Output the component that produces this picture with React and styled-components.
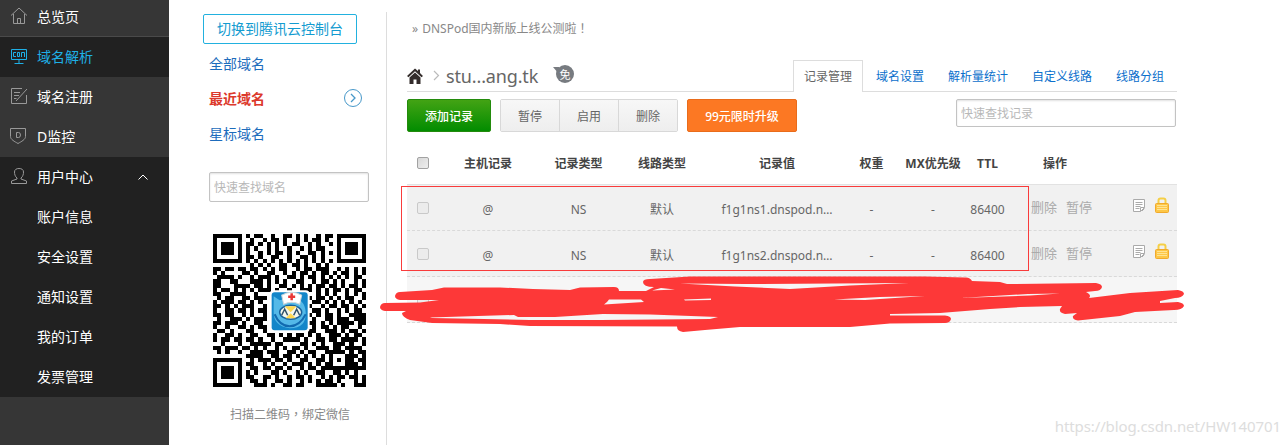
import styled, { createGlobalStyle, css } from 'styled-components';

const GlobalStyle = createGlobalStyle`
    * {
        box-sizing: border-box;
    }
    body {
        margin: 0;
        background: #fff;
        font-family: "Noto Sans", "Noto Sans CJK SC", sans-serif;
        font-size: 12px;
        color: #666;
    }
`;

const topMenu = [
    { label: '域名解析', icon: 'screen', active: true },
    { label: '域名注册', icon: 'edit' },
    { label: 'D监控', icon: 'shield' },
];
const userMenu = ['账户信息', '安全设置', '通知设置', '我的订单', '发票管理'];
const tabs = ['记录管理', '域名设置', '解析量统计', '自定义线路', '线路分组'];
const headers = ['主机记录', '记录类型', '线路类型', '记录值', '权重', 'MX优先级', 'TTL'];
const records = [
    ['@', 'NS', '默认', 'f1g1ns1.dnspod.n…', '-', '-', '86400'],
    ['@', 'NS', '默认', 'f1g1ns2.dnspod.n…', '-', '-', '86400'],
];

const qrRows = [
    '#######.#.##..#..##.#.#..#.##.#######',
    '#.....#..#..#.##.#..#.#.##.#..#.....#',
    '#.###.#.##.#.#.#.#.##..#.#..#.#.###.#',
    '#.###.#.#.#..#.#..#..#.#.##...#.###.#',
    '#.###.#.#..#.#.##.#.#..##.#.#.#.###.#',
    '#.....#.##.#..##..#..##.#.#...#.....#',
    '#######.#.#.#.#.#.#.#.#.#.#.#.#######',
    '.........#.#.#..##.##.#..#.#.........',
    '##.##.##.##.#.#.##..#.##.###..#.#.#.#',
    '#.#....##.#..##..#.#.##.#.##.#.##.#.#',
    '.####.#..#.###.#..##.#.##.#.#.#.#.##.',
    '##..##...###.#.#.#..##..#.##.#.#..#.#',
    '##...####.##.#..##.#.#.#.##.##.#.##.#',
    '#.##.#.#.#.###.#..#..###.#.#.##.#.##.',
    '##..####..#...........#..#.#.#..#.#.#',
    '.#.##..##.###..........#.##.#.#.##..#',
    '#.###.##.#.#............##.#.#.#.#.#.',
    '##.#.#.###..#..........#..#.##.##.#.#',
    '#..##.##.#.##...........##.#..#.#.##.',
    '##.##..#.#..#..........#.#.##.#..####',
    '.#..###.#.###...........#..##.###.###',
    '##.###.#..##...........##.#.#.####.##',
    '#..#..##.#.##...........#.##.#.##..#.',
    '.##.#...##..#..........##..###.#.##.#',
    '#..##.#..##..##.#.#.##.#.#..###.#.##.',
    '#.##.##.##.#..#..####.#..##.##.####.#',
    '..#...#..#####.##....##.#.#..###.#..#',
    '##.###.##.#.#..#.#.##.#..###.##.####.',
    '.#.#..#..###.###..##.#.##..#####.#.##',
    '........####..##.##.#.#.#.#.#...###.#',
    '#######..#.###.##.#..##..##.#.#.##.##',
    '#.....#.##..#.#..#.###.#.#.##...###.#',
    '#.###.#..##.##.##.#..#.##.###########',
    '#.###.#.#.#...##.#..#.#..##..##.#.#..',
    '#.###.#.##..##.#..#.##.#..#.#.##.##.#',
    '#.....#..##.#..##.#..#.#.#.##.#...#.#',
    '#######...###.#..##.##...#####.#..###',
];

function MenuIcon({ type }) {
    return (
        <svg width="18" height="18" viewBox="0 0 18 18" fill="none" stroke="currentColor">
            {type === 'home' && <path d="M1 8.5 9 1l8 7.5M3.5 7v9.5h11V7M7.5 16.500v-5h3v5" />}
            {type === 'screen' && (
                <path d="M1.500 2.500h15v10h-15zM9 13v3.500M4.500 16.500h9M6 5.500H3.500v4H6M7.500 5.500h2v4h-2zM11.500 10V5.500h3V10" />
            )}
            {type === 'edit' && <path d="M12 1.500H1.500v15h15V8M17 2 6 14M4 5.500h6M4 8.500h5M4 11.500h2.500" />}
            {type === 'shield' && <path d="M.5 1.500h15v8c0 3-4 5-7.500 7C4.500 14.500.5 12.500.5 9.500zM6.500 5.500h2q2 0 2 2.500t-2 2.500h-2z" />}
            {type === 'user' && (
                <path d="M7 11C5 9.500 4.500 7 4.500 5 4.500 2.500 6.500 1.500 9 1.500s4.500 1 4.500 3.500c0 2-.5 4.500-2.500 6v1l5.500 2v2.500h-15V14L7 12z" />
            )}
        </svg>
    );
}

function QrCode() {
    const d = qrRows
        .flatMap((row, y) => [...row].map((c, x) => (c === '#' ? `M${x} ${y}h1v1h-1z` : '')))
        .join('');
    return (
        <svg width="153" height="153" viewBox="0 0 37 37">
            <path d={d} fill="#000" shapeRendering="crispEdges" />
            <g transform="translate(13.7 13.600) scale(.242)">
                <rect width="40" height="42" rx="4" fill="#fff" />
                <rect x="2" y="2" width="36" height="38" rx="3" fill="#1386c9" />
                <path d="M4 6l6 4 7-2q18-2 19 14T20 38Q4 36 4 22z" fill="#54b9e8" />
                <path d="M5 24q5 12 15 12t16-12" fill="none" stroke="#126bb0" strokeWidth="2" />
                <ellipse cx="21" cy="22" rx="11" ry="7" fill="#f4f7ed" stroke="#18629c" strokeWidth="1.500" />
                <path d="M15 16h12l-6 6zM16 28l5-5 5 5z" fill="#ffd850" />
                <path d="M12 25l3-6 3 6M24 25l3-6 3 6" fill="none" stroke="#315169" strokeWidth="1.500" />
                <path d="M12 5q10-6 20 0l-2 9q-8-4-16 0z" fill="#fff" stroke="#ccd6da" />
                <path d="M22 3v7M18.500 6.500h7" stroke="#e83837" strokeWidth="2.500" />
            </g>
        </svg>
    );
}

function RowIcons() {
    return (
        <Icons>
            <svg width="14" height="16" viewBox="0 0 14 16" fill="none" stroke="#aaa">
                <path d="M1.500 2.500h11v8l-4 4h-7z" fill="#fff" />
                <path d="M3.500 5.500h7M3.500 7.500h7M3.500 9.500h5M3.500 11.500h4M8.500 14.500v-4h4M10 14l2.500-2.500" />
            </svg>
            <svg width="14" height="17" viewBox="0 0 14 17">
                <path d="M3.500 8V3.500q0-2 2-2h3q2 0 2 2V8" fill="none" stroke="#f5cf46" strokeWidth="2" />
                <rect x=".5" y="6.500" width="13" height="9" rx="1" fill="#fdc747" stroke="#f1aa2c" />
                <path d="M2 8.500h10M2 10.500h10M2 12.500h10" stroke="#ffe392" />
            </svg>
        </Icons>
    );
}

function Scribble() {
    return (
        <ScribbleLayer viewBox="380 270 810 65" fill="#fd3838">
            <path d="M400 292 432 290 444 287.500 500 287.500 533 289 570 290 580 287.500 614 287Q619 287 619 291L646 291 654 287Q643 287 643 282 643 279 650 279L690 276.500H925L965 277.500Q970 277 972 281L1000 282 1007 284 1096 283Q1102 284 1102 287 1101 291 1095 291L1086 292Q1092 295 1089 298L1130 293 1178 290Q1184 291 1184 294 1182 298 1175 298L1160 301V303L1178 302Q1184 303 1184 306 1182 310 1174 310L1135 312 1120 316 1078 320.500Q1072 320 1073 316L1077 313 1065 314Q1059 313 1060 309L1062 306 1020 307 990 309 940 313 890 314V315.500H945Q951 316 951 319 950 323 945 323L890 323.500 850 327H740L705 330 683 332Q677 331 677 326.500L530 326 500 324 432 323 410 320Q402 317 402 313L406 311H385Q380 310 380 307 381 303 385 303L420 302.500 439 300H400Q395 299 395 296 396 292 400 292Z" />
            <g fill="#f6f6f6">
                <path d="M680 283.500 745 284 909 283 850 285.500 790 289 735 286.500zM661 288 675 289.500 652 290.500zM609 299.500H641L644 302 604 304.500 607 302zM684 299.500 711 298.500V300L685 300.500zM834 299.500 880 297 925 296 865 300zM960 298 1028 294 1060 293.500 1030 295.500z" />
                <path d="M430 317.500 514 315 518 317H555L603 314 650 314.500 718 317 710 319 600 320H530L432 318z" />
            </g>
        </ScribbleLayer>
    );
}

export default function App() {
    return (
        <Page>
            <GlobalStyle />
            <Sidebar>
                <MenuItem $first>
                    <MenuIcon type="home" />
                    <MenuText>总览页</MenuText>
                </MenuItem>
                {topMenu.map((item) => (
                    <MenuItem key={item.label} $active={item.active}>
                        <MenuIcon type={item.icon} />
                        <MenuText>{item.label}</MenuText>
                    </MenuItem>
                ))}
                <SubMenu>
                    <MenuItem>
                        <MenuIcon type="user" />
                        <MenuText>用户中心</MenuText>
                        <Caret width="10" height="6" viewBox="0 0 10 6">
                            <path d="M.5 5.500 5 1l4.500 4.500" fill="none" stroke="#fff" />
                        </Caret>
                    </MenuItem>
                    {userMenu.map((label) => (
                        <SubItem key={label}>{label}</SubItem>
                    ))}
                </SubMenu>
            </Sidebar>

            <DomainPanel>
                <SwitchButton>切换到腾讯云控制台</SwitchButton>
                <DomainLink>全部域名</DomainLink>
                <DomainLink $active>
                    最近域名
                    <svg width="20" height="20" viewBox="0 0 20 20" fill="none" stroke="#4798c9">
                        <circle cx="10" cy="10" r="8.500" />
                        <path d="m8 6 4 4-4 4" strokeWidth="1.300" />
                    </svg>
                </DomainLink>
                <DomainLink>星标域名</DomainLink>
                <DomainSearch placeholder="快速查找域名" />
                <QrBox>
                    <QrCode />
                </QrBox>
                <QrCaption>扫描二维码<Mark>，</Mark>绑定微信</QrCaption>
            </DomainPanel>

            <Main>
                <Notice>
                    <b>»</b> DNSPod国内新版上线公测啦<Mark>！</Mark>
                </Notice>
                <TitleBar>
                    <svg width="16" height="16" viewBox="0 0 16 16">
                        <path d="M0 8 8 .5 11 3V1.500h2V5l3 3-1.500 1.300L8 3.200 1.500 9.300z" fill="#332c2b" />
                        <path d="M2.500 9.500 8 4.500l5.500 5V16H9.500v-4.500h-3V16h-4z" fill="#332c2b" />
                    </svg>
                    <Chevron width="7" height="11" viewBox="0 0 7 11">
                        <path d="m1 1 4.500 4.500L1 10" fill="none" stroke="#bbb" strokeWidth="1.200" />
                    </Chevron>
                    <DomainName>stu...ang.tk</DomainName>
                    <FreeBadge>免</FreeBadge>
                    <Tabs>
                        {tabs.map((tab, i) => (
                            <Tab key={tab} $active={i === 0}>{tab}</Tab>
                        ))}
                    </Tabs>
                </TitleBar>
                <Toolbar>
                    <AddButton>添加记录</AddButton>
                    <ButtonGroup>
                        <GroupButton>暂停</GroupButton>
                        <GroupButton>启用</GroupButton>
                        <GroupButton>删除</GroupButton>
                    </ButtonGroup>
                    <UpgradeButton>99元限时升级</UpgradeButton>
                    <RecordSearch placeholder="快速查找记录" />
                </Toolbar>
                <HeaderRow>
                    <Check />
                    {headers.map((h) => <span key={h}>{h}</span>)}
                    <HeaderAction>操作</HeaderAction>
                </HeaderRow>
                <Records>
                    {records.map((record) => (
                        <RecordRow key={record[3]}>
                            <Check $muted />
                            {record.map((cell, i) => <Cell key={i}>{cell}</Cell>)}
                            <Actions>
                                <span>删除</span>
                                <span>暂停</span>
                                <RowIcons />
                            </Actions>
                        </RecordRow>
                    ))}
                    <RecordRow $light>
                        <Check $muted />
                    </RecordRow>
                    <RedFrame />
                </Records>
            </Main>
            <Scribble />
            <Watermark>https://blog.csdn.net/HW140701</Watermark>
        </Page>
    );
}

const Page = styled.div`
    position: relative;
    display: flex;
    width: 1288px;
    height: 445px;
    overflow: hidden;
    background: #fff;
`;

const Sidebar = styled.nav`
    width: 169px;
    background: #363636;
    color: #fff;
    font-size: 14px;
`;

const MenuItem = styled.div`
    display: flex;
    align-items: center;
    height: 40px;
    padding: 0 0 2px 10px;
    svg {
        color: #999;
    }
    ${(p) => p.$first && css`
        height: 37px;
        padding-bottom: 5px;
        border-bottom: 1px solid #4a4a4a;
    `}
    ${(p) => p.$active && css`
        background: #212121;
        color: #1fb0e6;
        svg {
            color: #1fb0e6;
        }
    `}
`;

const MenuText = styled.span`
    margin-left: 9px;
`;

const Caret = styled.svg`
    margin: 2px 0 0 45px;
`;

const SubMenu = styled.div`
    height: 240px;
    background: #212121;
`;

const SubItem = styled.div`
    height: 40px;
    padding-left: 37px;
    line-height: 40px;
`;

const DomainPanel = styled.aside`
    width: 218px;
    height: 433px;
    margin-top: 12px;
    padding: 2px 17px 0 34px;
    border-right: 1px solid #ddd;
`;

const SwitchButton = styled.button`
    display: block;
    width: 154px;
    height: 30px;
    margin-bottom: 2px;
    padding: 0 0 2px;
    border: 1px solid #22b1df;
    border-radius: 2px;
    background: #fff;
    color: #139bd0;
    font: inherit;
    font-size: 14px;
`;

const DomainLink = styled.div`
    display: flex;
    align-items: center;
    justify-content: space-between;
    height: 35px;
    padding: 0 6px 2px;
    color: ${(p) => (p.$active ? '#dc392c' : '#1d6cbc')};
    font-size: 14px;
    font-weight: ${(p) => (p.$active ? 700 : 400)};
`;

const SearchInput = styled.input`
    border: 1px solid #c3c3c3;
    border-radius: 2px;
    box-shadow: inset 0 1px 2px rgba(0, 0, 0, 0.12);
    padding: 0 4px;
    font: inherit;
    &::placeholder {
        color: #b8b8b8;
    }
`;

const DomainSearch = styled(SearchInput)`
    display: block;
    width: 160px;
    height: 30px;
    margin: 21px 0 0 6px;
`;

const QrBox = styled.div`
    height: 153px;
    margin: 32px 0 0 10px;
`;

const QrCaption = styled.div`
    margin: 18px 0 0 27px;
    line-height: 18px;
    color: #888;
`;

/* centred full-width punctuation */
const Mark = styled.span`
    font-family: "Noto Sans CJK TC", sans-serif;
`;

const Main = styled.main`
    width: 770px;
    margin-left: 20px;
`;

const Notice = styled.div`
    height: 60px;
    padding: 19px 0 0 5px;
    line-height: 18px;
    color: #888;
    b {
        margin-right: 1px;
        font-weight: 400;
    }
`;

const TitleBar = styled.div`
    display: flex;
    align-items: center;
    height: 32px;
    border-bottom: 1px solid #ddd;
`;

const Chevron = styled.svg`
    margin-left: 10px;
`;

const DomainName = styled.h1`
    width: 92px;
    margin: 0 0 0 6px;
    color: #666;
    font-size: 18px;
    font-weight: 400;
    letter-spacing: -0.15px;
    white-space: nowrap;
`;

const FreeBadge = styled.span`
    position: relative;
    width: 18px;
    height: 18px;
    margin: -3px 0 0 18px;
    border-radius: 9px;
    background: #777b80;
    color: #fff;
    font-size: 11px;
    line-height: 19px;
    text-align: center;
    &::before {
        content: '';
        position: absolute;
        left: -3px;
        top: 2px;
        border-top: 7px solid #777b80;
        border-left: 6px solid transparent;
    }
`;

const Tabs = styled.div`
    display: flex;
    align-self: flex-start;
    height: 32px;
    margin-left: auto;
    padding-right: 1px;
`;

const Tab = styled.span`
    height: 31px;
    padding: 0 12px;
    color: #0b70cc;
    line-height: 34px;
    ${(p) => p.$active && css`
        height: 32px;
        padding: 0 10px;
        margin-right: 1px;
        border: 1px solid #ddd;
        border-bottom: 0;
        background: #fff;
        color: #666;
        line-height: 32px;
    `}
`;

const Toolbar = styled.div`
    display: flex;
    height: 50px;
    padding: 7px 1px 0 0;
`;

const Button = styled.button`
    height: 33px;
    padding: 0;
    border: 1px solid;
    border-radius: 2px;
    font: inherit;
`;

const AddButton = styled(Button)`
    width: 84px;
    border-color: #238b0c;
    background: linear-gradient(#43a314, #028c00);
    color: #fff;
    font-weight: 500;
`;

const ButtonGroup = styled.div`
    display: flex;
    width: 178px;
    height: 33px;
    margin: 0 9px;
    border: 1px solid #d8d8d8;
    border-radius: 2px;
`;

const GroupButton = styled.button`
    flex: 1;
    padding: 0;
    border: 0;
    background: linear-gradient(#f7f7f7, #eee);
    color: #666;
    font: inherit;
    & + & {
        border-left: 1px solid #d8d8d8;
    }
`;

const UpgradeButton = styled(Button)`
    width: 110px;
    border-color: #e96c1b;
    background: #fc7823;
    color: #fff;
    font-weight: 500;
`;

const RecordSearch = styled(SearchInput)`
    width: 220px;
    height: 28px;
    margin-left: auto;
`;

const rowGrid = css`
    display: grid;
    grid-template-columns: 32px 98px 83px 84px 146px 43px 80px 29px 175px;
    align-items: center;
    justify-items: center;
    white-space: nowrap;
`;

const HeaderRow = styled.div`
    ${rowGrid}
    height: 43px;
    border-bottom: 1px solid #e2e2e2;
    color: #444;
    font-weight: 700;
`;

const HeaderAction = styled.span`
    justify-self: start;
    margin-left: 41px;
`;

const Records = styled.div`
    position: relative;
`;

const RecordRow = styled.div`
    ${rowGrid}
    height: 46px;
    border-bottom: 1px dashed #d9d9d9;
    background: ${(p) => (p.$light ? '#f6f6f6' : '#f1f1f1')};
`;

const Cell = styled.span`
    padding-top: 3px;
`;

const Check = styled.i`
    width: 12px;
    height: 12px;
    border: 1px solid ${(p) => (p.$muted ? '#c9c9c9' : '#a2a2a2')};
    border-radius: 2px;
    background: ${(p) => (p.$muted ? '#ececec' : 'linear-gradient(135deg, #d8d8d8, #eee)')};
`;

const Actions = styled.div`
    display: flex;
    align-items: center;
    justify-self: stretch;
    gap: 9px;
    margin-top: -3px;
    padding-left: 29px;
    color: #aaa;
    font-size: 13px;
`;

const Icons = styled.div`
    display: flex;
    align-items: center;
    gap: 9px;
    margin-left: 31px;
    margin-top: -2px;
`;

const RedFrame = styled.div`
    position: absolute;
    left: -6px;
    top: 1px;
    width: 628px;
    height: 85px;
    border: 1px solid #f93b3b;
`;

const ScribbleLayer = styled.svg`
    position: absolute;
    left: 380px;
    top: 270px;
    width: 810px;
    height: 65px;
`;

const Watermark = styled.span`
    position: absolute;
    right: 7px;
    bottom: 8px;
    color: #ddd;
    font-size: 15px;
    letter-spacing: -0.1px;
    line-height: 22px;
`;
